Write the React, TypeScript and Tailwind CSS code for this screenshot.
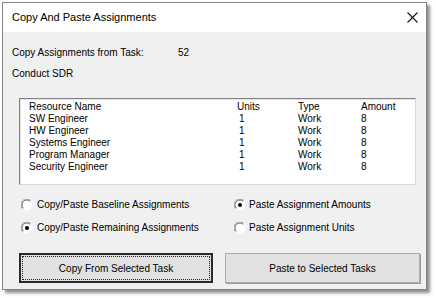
import React from "react";

const font = { fontFamily: '"Liberation Sans", Arial, sans-serif' };

function Radio({ checked }: { checked: boolean }) {
  return (
    <svg width="12" height="12" viewBox="0 0 12 12" className="shrink-0">
      <circle cx="6" cy="6" r="5.5" fill="#ffffff" />
      <path d="M1.6 9.9 A5.5 5.5 0 0 1 9.9 1.6" fill="none" stroke="#a0a0a0" strokeWidth="1" />
      <path d="M2.4 9.2 A4.5 4.5 0 0 1 9.2 2.4" fill="none" stroke="#696969" strokeWidth="1" />
      <path d="M9.9 1.6 A5.5 5.5 0 0 1 1.6 9.9" fill="none" stroke="#f4f4f4" strokeWidth="1" />
      {checked && <circle cx="6" cy="6" r="2" fill="#000000" />}
    </svg>
  );
}

const rows = [
  ["SW Engineer", "1", "Work", "8"],
  ["HW Engineer", "1", "Work", "8"],
  ["Systems Engineer", "1", "Work", "8"],
  ["Program Manager", "1", "Work", "8"],
  ["Security Engineer", "1", "Work", "8"],
];

export default function App() {
  return (
    <div className="w-[436px] h-[298px] bg-white pt-[2px] pl-[2px]" style={font}>
      <div className="w-[425px] h-[288px] border border-[#858585] bg-[#f0f0f0] flex flex-col shadow-[3px_3px_3px_rgba(0,0,0,0.45)]">
        <div className="h-[29px] bg-white flex items-center justify-between pl-[9px] pr-[8px] shrink-0">
          <span className="text-[11px] text-[#000]">Copy And Paste Assignments</span>
          <svg width="11" height="11" viewBox="0 0 11 11">
            <path d="M0.5 0.5 L10.5 10.5 M10.5 0.5 L0.5 10.5" stroke="#111" strokeWidth="1.1" />
          </svg>
        </div>
        <div className="flex flex-col pl-[9px] text-[10px] leading-[13px] text-black">
          <div className="flex mt-[14px]">
            <span className="w-[166px]">Copy Assignments from Task:</span>
            <span>52</span>
          </div>
          <div className="mt-[8px]">Conduct SDR</div>
        </div>
        <div className="ml-[16px] mt-[18px] w-[397px] h-[87px] bg-white border border-t-[#828282] border-l-[#828282] border-r-[#d8d8d8] border-b-[#d8d8d8] shadow-[inset_1px_1px_0_#e3e3e3] pt-[2px] pl-[9px] text-[10px] leading-[12px] text-black">
          <div className="flex">
            <span className="w-[208px]">Resource Name</span>
            <span className="w-[61px]">Units</span>
            <span className="w-[63px]">Type</span>
            <span>Amount</span>
          </div>
          {rows.map((r) => (
            <div className="flex" key={r[0]}>
              <span className="w-[208px]">{r[0]}</span>
              <span className="w-[61px] pl-[2px]">{r[1]}</span>
              <span className="w-[63px]">{r[2]}</span>
              <span>{r[3]}</span>
            </div>
          ))}
        </div>
        <div className="grid grid-cols-[213px_1fr] ml-[18px] mt-[14px] gap-y-[11px] text-[10px] leading-[12px] text-black">
          <div className="flex items-center gap-[4px]">
            <Radio checked={false} />
            <span>Copy/Paste Baseline Assignments</span>
          </div>
          <div className="flex items-center gap-[3px]">
            <Radio checked={true} />
            <span>Paste Assignment Amounts</span>
          </div>
          <div className="flex items-center gap-[4px]">
            <Radio checked={true} />
            <span>Copy/Paste Remaining Assignments</span>
          </div>
          <div className="flex items-center gap-[3px]">
            <Radio checked={false} />
            <span>Paste Assignment Units</span>
          </div>
        </div>
        <div className="flex ml-[16px] mt-[19px] gap-[12px] text-[10px] text-black">
          <div className="w-[194px] h-[30px] border-2 border-[#2b2b2b] bg-[#e1e1e1] p-[1px]">
            <div className="w-full h-full border border-dotted border-[#222] flex items-center justify-center">
              Copy From Selected Task
            </div>
          </div>
          <div className="w-[195px] h-[30px] border border-[#adadad] bg-[#e1e1e1] shadow-[1px_1px_0_#9a9a9a] flex items-center justify-center">
            Paste to Selected Tasks
          </div>
        </div>
      </div>
    </div>
  );
}
